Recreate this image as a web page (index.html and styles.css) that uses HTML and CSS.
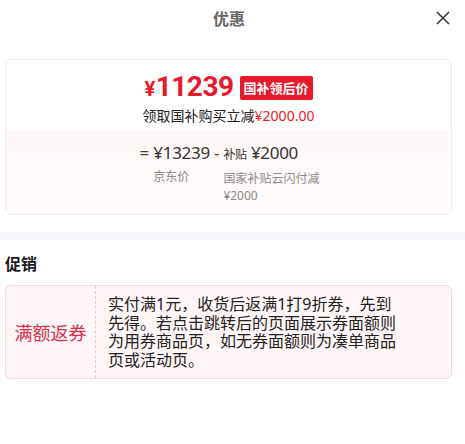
FILE: index.html
```html
<!DOCTYPE html>
<html lang="zh-CN">
<head>
  <meta charset="UTF-8" />
  <meta name="viewport" content="width=device-width, initial-scale=1.0"/>
  <title>优惠</title>
  <link rel="stylesheet" href="styles.css">
</head>
<body>
  <div class="header">
    <span></span>
    <h1 class="title">优惠</h1>
    <button class="close" type="button" aria-label="关闭">
      <svg width="14" height="14" viewBox="0 0 14 14">
        <path d="M1 1 L13 13 M13 1 L1 13" stroke="#333" stroke-width="1.5" fill="none"/>
      </svg>
    </button>
  </div>

  <div class="wrap">
    <div class="card">
      <div class="card-top">
        <div class="price-row">
          <span class="price"><span class="yen">¥</span>11239</span>
          <span class="badge">国补领后价</span>
        </div>
        <div class="price-sub">领取国补购买立减<span class="red">¥2000.00</span></div>
      </div>
      <div class="card-bottom">
        <div class="formula">
          <div class="op">=</div>
          <div class="term">
            <div class="num">¥13239</div>
            <div class="label">京东价</div>
          </div>
          <div class="op">-</div>
          <div class="term term-wide">
            <div class="num"><span class="small">补贴</span> ¥2000</div>
            <div class="label">国家补贴云闪付减 ¥2000</div>
          </div>
        </div>
      </div>
    </div>
  </div>

  <div class="band"></div>

  <div class="wrap">
    <h2 class="section-title">促销</h2>
    <div class="promo">
      <div class="promo-tag">满额返券</div>
      <div class="promo-text">实付满1元，收货后返满1打9折券，先到先得。若点击跳转后的页面展示券面额则为用券商品页，如无券面额则为凑单商品页或活动页。</div>
    </div>
  </div>
</body>
</html>
```

FILE: styles.css
```css
body {
  margin: 0;
  padding: 0;
  background-color: #fff;
  font-family: "Noto Sans", "Noto Sans CJK SC", sans-serif;
  color: #222;
}
.header {
  display: grid;
  grid-template-columns: 1fr auto 1fr;
  align-items: center;
  height: 36px;
  padding: 0 15px 0 8px;
}
.title {
  margin: 0;
  font-size: 16px;
  font-weight: bold;
  color: #666;
}
.close {
  justify-self: end;
  background: none;
  border: none;
  padding: 0;
  width: 14px;
  height: 14px;
  display: flex;
  cursor: pointer;
}
.wrap {
  padding-left: 5px;
  width: 447px;
}
.card {
  margin-top: 23px;
  border: 1px solid #eeeaeb;
  border-radius: 6px;
  overflow: hidden;
}
.card-top {
  padding: 13px 0 4px;
  text-align: center;
}
.price-row {
  display: flex;
  justify-content: center;
  align-items: center;
  gap: 6px;
  height: 30px;
  margin-bottom: 3px;
}
.price {
  color: #e8192c;
  font-family: Roboto, "Noto Sans", sans-serif;
  font-size: 28px;
  font-weight: bold;
  letter-spacing: -0.5px;
  line-height: 30px;
}
.yen {
  font-size: 20px;
  margin-right: 1px;
}
.badge {
  background-color: #e8192c;
  color: #fff;
  font-size: 13px;
  font-weight: bold;
  line-height: 24px;
  padding: 0 4px;
  border-radius: 2px;
}
.price-sub {
  font-size: 14px;
  line-height: 20px;
  color: #222;
}
.red {
  color: #e8192c;
}
.card-bottom {
  background: linear-gradient(#fff7f7, #fffbfb);
  padding: 11px 0 10px;
}
.formula {
  display: flex;
  justify-content: center;
  align-items: flex-start;
  gap: 4px;
  padding-left: 4px;
}
.op {
  font-size: 17px;
  line-height: 24px;
  color: #444;
}
.num {
  font-size: 17px;
  line-height: 24px;
  letter-spacing: -0.3px;
  color: #333;
  white-space: nowrap;
}
.small {
  font-size: 12px;
}
.label {
  margin-top: 3px;
  font-size: 12px;
  line-height: 17px;
  color: #8a8a8a;
}
.term-wide {
  width: 98px;
}
.band {
  margin-top: 17px;
  height: 8px;
  background-color: #f5f6f9;
}
.section-title {
  margin: 14px 0 0;
  font-size: 16px;
  line-height: 20px;
  font-weight: bold;
  color: #1a1a1a;
}
.promo {
  display: flex;
  margin-top: 11px;
  background-color: #fff6f7;
  border: 1px solid #f6d8dc;
  border-radius: 6px;
}
.promo-tag {
  width: 89px;
  flex-shrink: 0;
  display: flex;
  align-items: center;
  justify-content: center;
  border-right: 1px dashed #eac6cb;
  font-size: 18px;
  color: #d9304a;
}
.promo-text {
  width: 292px;
  padding: 9px 0 9px 12px;
  font-size: 16px;
  line-height: 18.5px;
  color: #222;
}
```
